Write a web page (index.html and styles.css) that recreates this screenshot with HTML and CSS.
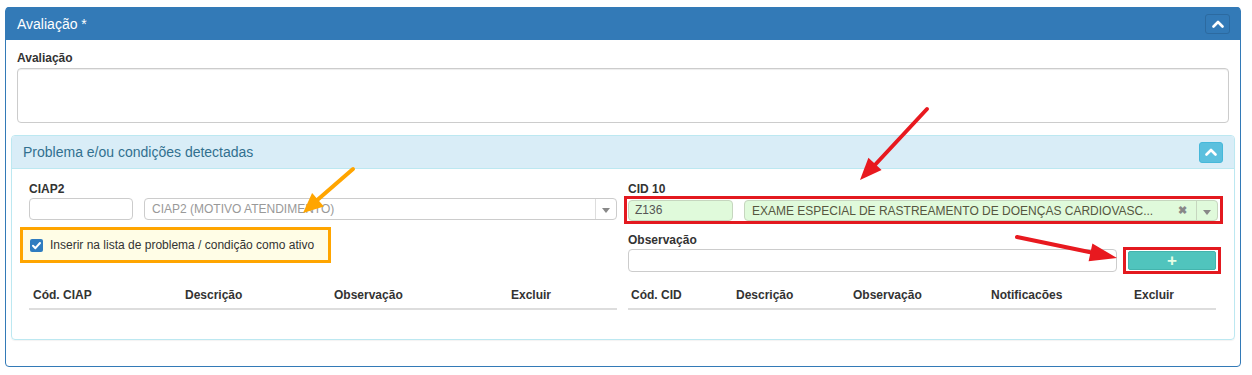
FILE: index.html
```html
<!DOCTYPE html>
<html lang="pt">
<head>
<meta charset="utf-8">
<title>Avaliação</title>
<link rel="stylesheet" href="styles.css">
</head>
<body>
<div class="panel">
  <div class="panel-heading">
    <span class="panel-title">Avaliação *</span>
    <span class="btn-collapse primary"><svg width="12" height="8" viewBox="0 0 12 8"><polyline points="1.5,6.5 6,2 10.5,6.5" fill="none" stroke="#fff" stroke-width="2.6" stroke-linecap="round" stroke-linejoin="round"/></svg></span>
  </div>
  <div class="panel-body">
    <div class="lbl top-lbl">Avaliação</div>
    <div class="textarea"></div>
    <div class="subpanel">
      <div class="subpanel-heading">
        <span class="subpanel-title">Problema e/ou condições detectadas</span>
        <span class="btn-collapse info"><svg width="12" height="8" viewBox="0 0 12 8"><polyline points="1.5,6.5 6,2 10.5,6.5" fill="none" stroke="#fff" stroke-width="2.6" stroke-linecap="round" stroke-linejoin="round"/></svg></span>
      </div>
      <div class="subpanel-body">
        <div class="form-left">
          <div class="lbl">CIAP2</div>
          <div class="ciap-row">
            <div class="field small"></div>
            <div class="field select">
              <span class="placeholder">CIAP2 (MOTIVO ATENDIMENTO)</span>
              <span class="sep"></span>
              <span class="caret"></span>
            </div>
          </div>
          <div class="hl-orange">
            <span class="checkbox"><svg width="13" height="13" viewBox="0 0 13 13"><polyline points="3,6.8 5.4,9.2 10,4" fill="none" stroke="#fff" stroke-width="2" stroke-linecap="round" stroke-linejoin="round"/></svg></span>
            <span class="check-text">Inserir na lista de problema / condição como ativo</span>
          </div>
        </div>
        <div class="form-right">
          <div class="lbl">CID 10</div>
          <div class="hl-red cid">
            <div class="field green code">Z136</div>
            <div class="field green select">
              <span class="value">EXAME ESPECIAL DE RASTREAMENTO DE DOENÇAS CARDIOVASC...</span>
              <span class="clear">✖</span>
              <span class="sep green-sep"></span>
              <span class="caret"></span>
            </div>
          </div>
          <div class="lbl obs-lbl">Observação</div>
          <div class="obs-row">
            <div class="field obs"></div>
            <div class="hl-red plus-box"><span class="btn-plus">+</span></div>
          </div>
        </div>
        <table class="grid-table left">
          <thead>
            <tr><th class="c1">Cód. CIAP</th><th class="c2">Descrição</th><th class="c3">Observação</th><th class="c4">Excluir</th></tr>
          </thead>
        </table>
        <table class="grid-table right">
          <thead>
            <tr><th class="d1">Cód. CID</th><th class="d2">Descrição</th><th class="d3">Observação</th><th class="d4">Notificacões</th><th class="d5">Excluir</th></tr>
          </thead>
        </table>
      </div>
    </div>
  </div>
</div>
<svg class="annotations" width="1252" height="375" viewBox="0 0 1252 375">
  <line x1="353" y1="169" x2="315" y2="202" stroke="#ffa500" stroke-width="4" stroke-linecap="round"/>
  <polygon points="303,213 323.9,206.6 312.1,193" fill="#ffa500"/>
  <line x1="927" y1="109" x2="873" y2="167" stroke="#e8191f" stroke-width="4" stroke-linecap="round"/>
  <polygon points="860,180 881.6,170 868.4,157.8" fill="#e8191f"/>
  <line x1="1017" y1="237" x2="1094" y2="253" stroke="#e8191f" stroke-width="4" stroke-linecap="round"/>
  <polygon points="1117,258 1088.6,261.2 1092.4,243.6" fill="#e8191f"/>
</svg>
</body>
</html>
```

FILE: styles.css
```css
body {
  margin: 0;
  font-family: "Liberation Sans", Arial, sans-serif;
  font-size: 12px;
  color: #333;
  background: #fff;
}

.panel {
  margin: 7px 0 0 5px;
  width: 1236px;
  box-sizing: border-box;
  border: 1px solid #337ab7;
  border-radius: 4px;
}

.panel-heading {
  background: #337ab7;
  height: 32px;
  margin-top: -1px;
  border-top: 1px solid #337ab7;
  border-radius: 3px 3px 0 0;
  display: flex;
  align-items: center;
  justify-content: space-between;
  padding: 0 10px 0 11px;
  color: #fff;
  font-size: 14px;
}

.btn-collapse {
  display: flex;
  align-items: center;
  justify-content: center;
  box-sizing: border-box;
  border-radius: 3px;
}

.btn-collapse.primary {
  width: 25px;
  height: 20px;
  background: #337ab7;
  border: 1px solid #2c6aa0;
}

.btn-collapse.info {
  width: 24px;
  height: 21px;
  background: #5bc0de;
  border: 1px solid #46b8da;
}

.panel-body {
  padding: 10px 11px 26px;
}

.lbl {
  font-weight: bold;
  line-height: 17px;
  height: 17px;
}

.top-lbl {
  height: 16px;
}

.textarea {
  height: 55px;
  margin-top: 2px;
  box-sizing: border-box;
  border: 1px solid #ccc;
  border-radius: 4px;
  box-shadow: inset 0 1px 1px rgba(0, 0, 0, 0.075);
}

.subpanel {
  margin: 12px -6px 0 -6px;
  border: 1px solid #bce8f1;
  border-radius: 4px;
  box-shadow: 0 1px 1px rgba(0, 0, 0, 0.05);
}

.subpanel-heading {
  background: #d9edf7;
  height: 32px;
  border-bottom: 1px solid #bce8f1;
  border-radius: 3px 3px 0 0;
  display: flex;
  align-items: center;
  justify-content: space-between;
  padding: 0 11px;
  color: #31708f;
  font-size: 14px;
}

.subpanel-body {
  padding: 12px 17px 29px;
  display: grid;
  grid-template-columns: 588px 588px;
  column-gap: 11px;
}

.field {
  box-sizing: border-box;
  height: 22px;
  border: 1px solid #ccc;
  border-radius: 4px;
  background: #fff;
}

.ciap-row {
  display: flex;
  gap: 11px;
}

.field.small {
  width: 104px;
}

.field.select {
  flex: 1;
  display: flex;
  align-items: center;
  padding-left: 7px;
  min-width: 0;
}

.placeholder {
  color: #999;
  flex: 1;
  white-space: nowrap;
}

.sep {
  width: 1px;
  height: 20px;
  background: #ddd;
  margin-left: 8px;
}

.caret {
  width: 0;
  height: 0;
  border-left: 4px solid transparent;
  border-right: 4px solid transparent;
  border-top: 5px solid #888;
  margin: 3px 6px 0 6px;
}

.hl-orange {
  margin: 7px 0 0 -9px;
  width: 311px;
  height: 36px;
  box-sizing: border-box;
  border: 3px solid #ffa500;
  background: #fffde6;
  display: flex;
  align-items: center;
  padding-left: 7px;
  gap: 7px;
}

.checkbox {
  width: 13px;
  height: 13px;
  border-radius: 2px;
  background: #2f7cc0;
  display: flex;
  margin-top: 1px;
}

.check-text {
  color: #333;
}

.hl-red {
  border: 3px solid #e3191f;
  box-sizing: border-box;
}

.cid {
  margin: -2px 0 0 -4px;
  width: 599px;
  display: flex;
  gap: 11px;
  padding: 1px 2px 0 1px;
}

.field.green {
  height: 21px;
  background: #e0fadb;
  border-color: #c6d6bf;
}

.field.code {
  width: 105px;
  padding-left: 6px;
  line-height: 19px;
  color: #555;
}

.value {
  flex: 1;
  color: #56563f;
  white-space: nowrap;
  overflow: hidden;
}

.clear {
  color: #888;
  font-size: 11px;
  font-weight: bold;
  margin-left: 8px;
}

.green-sep {
  background: #c6d6bf;
  height: 19px;
  margin-left: 9px;
}

.obs-lbl {
  margin-top: 8px;
}

.obs-row {
  display: flex;
  align-items: center;
  margin-top: -2px;
}

.field.obs {
  flex: 1;
  height: 23px;
}

.plus-box {
  width: 98px;
  height: 27px;
  margin: 0 -5px 0 6px;
  padding: 1px 2px;
  display: flex;
}

.btn-plus {
  flex: 1;
  background: #50c4bd;
  border: 1px solid #44b4ad;
  border-radius: 2px;
  color: #e6ffe6;
  font-size: 17px;
  font-weight: bold;
  line-height: 17px;
  text-align: center;
}

.grid-table {
  width: 100%;
  border-collapse: collapse;
  table-layout: fixed;
}

.grid-table th {
  text-align: left;
  font-weight: bold;
  line-height: 17px;
  padding: 13px 0 4px 4px;
  border-bottom: 2px solid #ddd;
  white-space: nowrap;
}

.grid-table.right th {
  padding-left: 3px;
}

.c1 { width: 148px; }
.c2 { width: 145px; }
.c3 { width: 173px; }
.c4 { width: auto; }

.d1 { width: 102px; }
.d2 { width: 114px; }
.d3 { width: 135px; }
.d4 { width: 140px; }
.d5 { width: auto; }

.annotations {
  position: absolute;
  top: 0;
  left: 0;
  pointer-events: none;
}
```
